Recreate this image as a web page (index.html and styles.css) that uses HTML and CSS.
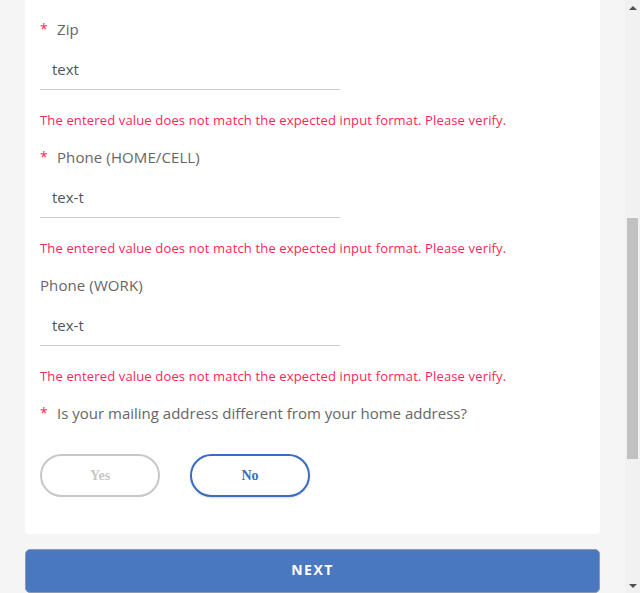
FILE: index.html
```html
<!DOCTYPE html>
<html lang="en">
<head>
<meta charset="utf-8">
<title>Form</title>
<link rel="stylesheet" href="styles.css">
</head>
<body>
<div class="frame">
  <main class="page">
    <section class="card">
      <div class="field">
        <div class="label"><span class="req">*</span>Zip</div>
        <div class="input">text</div>
        <div class="error">The entered value does not match the expected input format. Please verify.</div>
      </div>
      <div class="field">
        <div class="label"><span class="req">*</span>Phone (HOME/CELL)</div>
        <div class="input">tex-t</div>
        <div class="error">The entered value does not match the expected input format. Please verify.</div>
      </div>
      <div class="field">
        <div class="label">Phone (WORK)</div>
        <div class="input">tex-t</div>
        <div class="error">The entered value does not match the expected input format. Please verify.</div>
      </div>
      <div class="label question"><span class="req">*</span>Is your mailing address different from your home address?</div>
      <div class="choices">
        <button class="choice">Yes</button>
        <button class="choice selected">No</button>
      </div>
    </section>
    <button class="next">NEXT</button>
  </main>
  <div class="scrollbar">
    <span class="arrow up"></span>
    <div class="track"><div class="thumb"></div></div>
    <span class="arrow down"></span>
  </div>
</div>
</body>
</html>
```

FILE: styles.css
```css
* { box-sizing: border-box; }
html, body { margin: 0; padding: 0; height: 100%; overflow: hidden; }
body {
  background: #f5f5f5;
  font-family: "Open Sans", "Noto Sans", sans-serif;
}
.frame {
  display: flex;
  height: 593px;
  width: 640px;
}
.page {
  width: 625px;
  padding: 0 25px;
  display: flex;
  flex-direction: column;
}
.card {
  background: #fff;
  border-radius: 0 0 4px 4px;
  padding: 19px 15px 37px;
}
.field { margin-bottom: 17px; }
.label {
  font-size: 15px;
  line-height: 20px;
  color: #666;
  display: flex;
  letter-spacing: 0.1px;
}
.question { letter-spacing: 0; }
.req {
  color: #ff1f5a;
  width: 17px;
  font-size: 14px;
}
.input {
  margin-top: 10px;
  width: 300px;
  height: 41px;
  padding: 0 12px;
  font-size: 15px;
  line-height: 40px;
  color: #555;
  border-bottom: 1px solid #ccc;
}
.error {
  margin-top: 20px;
  font-size: 13px;
  line-height: 20px;
  color: #ff1f5a;
  letter-spacing: 0.15px;
}
.choices {
  display: flex;
  gap: 30px;
  margin-top: 31px;
}
.choice {
  width: 120px;
  height: 43px;
  border-radius: 22px;
  border: 2px solid #c8c8c8;
  background: #fff;
  font-family: "Liberation Serif", serif;
  font-weight: bold;
  font-size: 14px;
  color: #c8c8c8;
}
.choice.selected {
  border-color: #3a6cc0;
  color: #3a6cc0;
  box-shadow: 0 1px 2px rgba(0,0,0,0.15);
}
.next {
  margin-top: 15px;
  height: 46px;
  width: 100%;
  background: #4a78c0;
  border: 1px solid #8a9ab5;
  border-radius: 5px;
  color: #fff;
  font-family: "Open Sans", sans-serif;
  font-weight: bold;
  font-size: 14px;
  letter-spacing: 1.5px;
  padding: 0 0 4px;
}
.scrollbar {
  width: 15px;
  background: #f1f1f1;
  display: flex;
  flex-direction: column;
  align-items: center;
}
.arrow {
  height: 15px;
  width: 15px;
  display: flex;
  align-items: center;
  justify-content: center;
}
.arrow::before {
  content: "";
  border-left: 4px solid transparent;
  border-right: 4px solid transparent;
}
.arrow.up::before { border-bottom: 4px solid #505050; }
.arrow.down::before { border-top: 4px solid #505050; }
.track { flex: 1; width: 100%; padding: 203px 2px 0; }
.thumb { height: 241px; background: #c1c1c1; }
```
